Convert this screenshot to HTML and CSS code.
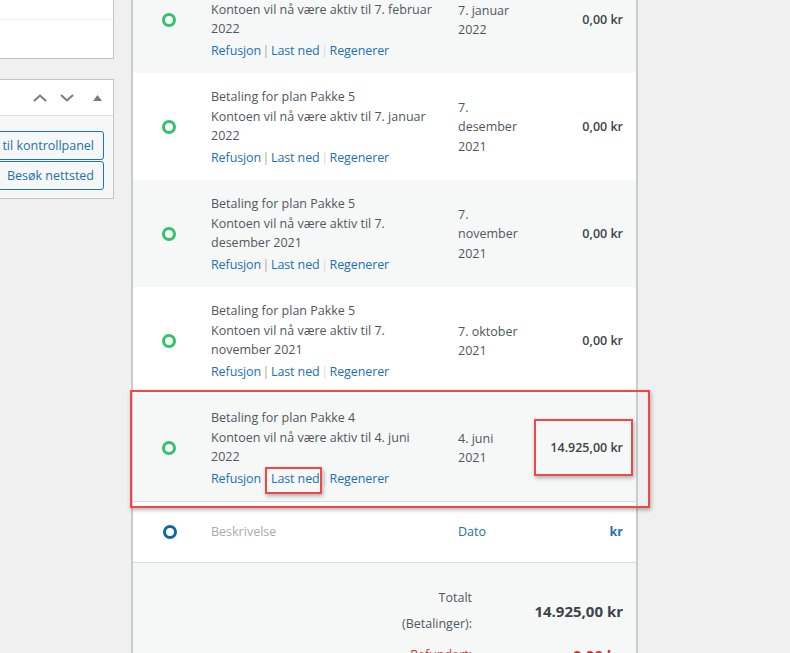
FILE: index.html
```html
<!DOCTYPE html>
<html>
  <head>
    <meta charset="utf-8">
    <title>Betalinger</title>
    <link rel="stylesheet" href="styles.css">
  </head>
  <body>
    <div class="page">
      <aside class="sidebar">
        <div class="box box-top">
          <div class="box-row"></div>
          <div class="box-row"></div>
        </div>

        <div class="box box-actions">
          <div class="box-head">
            <span class="handle">
              <svg width="14" height="8" viewBox="0 0 14 8"><path d="M1 7 L7 1.5 L13 7" fill="none" stroke="#787c82" stroke-width="2"/></svg>
            </span>
            <span class="handle">
              <svg width="14" height="8" viewBox="0 0 14 8"><path d="M1 1 L7 6.5 L13 1" fill="none" stroke="#787c82" stroke-width="2"/></svg>
            </span>
            <span class="handle toggle">
              <svg width="9" height="6" viewBox="0 0 9 6"><path d="M0 6 L4.5 0 L9 6 Z" fill="#787c82"/></svg>
            </span>
          </div>
          <div class="box-body">
            <a class="button" href="#">Tilbake til kontrollpanel</a>
            <a class="button" href="#">Besøk nettsted</a>
          </div>
        </div>
      </aside>

      <section class="payments">
        <div class="pay-row alt">
          <div class="pay-icon"><span class="dot"></span></div>
          <div class="pay-desc">
            <div>Betaling for plan Pakke 5</div>
            <div>Kontoen vil nå være aktiv til 7. februar 2022</div>
            <div class="row-actions"><a href="#">Refusjon</a><span class="sep">|</span><a href="#">Last ned</a><span class="sep light">|</span><a href="#">Regenerer</a></div>
          </div>
          <div class="pay-date">7. januar 2022</div>
          <div class="pay-amount">0,00 kr</div>
        </div>

        <div class="pay-row">
          <div class="pay-icon"><span class="dot"></span></div>
          <div class="pay-desc">
            <div>Betaling for plan Pakke 5</div>
            <div>Kontoen vil nå være aktiv til 7. januar 2022</div>
            <div class="row-actions"><a href="#">Refusjon</a><span class="sep">|</span><a href="#">Last ned</a><span class="sep light">|</span><a href="#">Regenerer</a></div>
          </div>
          <div class="pay-date">7. desember 2021</div>
          <div class="pay-amount">0,00 kr</div>
        </div>

        <div class="pay-row alt">
          <div class="pay-icon"><span class="dot"></span></div>
          <div class="pay-desc">
            <div>Betaling for plan Pakke 5</div>
            <div>Kontoen vil nå være aktiv til 7. desember 2021</div>
            <div class="row-actions"><a href="#">Refusjon</a><span class="sep">|</span><a href="#">Last ned</a><span class="sep light">|</span><a href="#">Regenerer</a></div>
          </div>
          <div class="pay-date">7. november 2021</div>
          <div class="pay-amount">0,00 kr</div>
        </div>

        <div class="pay-row">
          <div class="pay-icon"><span class="dot"></span></div>
          <div class="pay-desc">
            <div>Betaling for plan Pakke 5</div>
            <div>Kontoen vil nå være aktiv til 7. november 2021</div>
            <div class="row-actions"><a href="#">Refusjon</a><span class="sep">|</span><a href="#">Last ned</a><span class="sep light">|</span><a href="#">Regenerer</a></div>
          </div>
          <div class="pay-date">7. oktober 2021</div>
          <div class="pay-amount">0,00 kr</div>
        </div>

        <div class="pay-row alt last">
          <div class="pay-icon"><span class="dot"></span></div>
          <div class="pay-desc">
            <div>Betaling for plan Pakke 4</div>
            <div>Kontoen vil nå være aktiv til 4. juni 2022</div>
            <div class="row-actions"><a href="#">Refusjon</a><span class="sep">|</span><a href="#">Last ned</a><span class="sep light">|</span><a href="#">Regenerer</a></div>
          </div>
          <div class="pay-date">4. juni 2021</div>
          <div class="pay-amount">14.925,00 kr</div>
        </div>

        <div class="pay-row pay-foot">
          <div class="pay-icon"><span class="dot blue"></span></div>
          <div class="pay-desc muted">Beskrivelse</div>
          <div class="pay-date link">Dato</div>
          <div class="pay-amount link">kr</div>
        </div>

        <div class="totals">
          <div class="total-label">Totalt (Betalinger):</div>
          <div class="total-value">14.925,00 kr</div>
          <div class="total-label refund">Refundert:</div>
          <div class="total-value refund">0,00 kr</div>
        </div>
      </section>
    </div>

    <!-- red highlight marks from the screenshot -->
    <div class="mark mark-row"></div>
    <div class="mark mark-amount"></div>
    <div class="mark mark-link"></div>
  </body>
</html>
```

FILE: styles.css
```css
body {
  margin: 0;
  background-color: #f0f0f1;
  font-family: "Open Sans", "Noto Sans", sans-serif;
  font-size: 12.5px;
  color: #50575e;
  overflow: hidden;
}

a {
  color: #2271b1;
  text-decoration: none;
}

.page {
  display: flex;
  align-items: flex-start;
}

/* sidebar */

.sidebar {
  width: 220px;
  margin-left: -106px;
  flex-shrink: 0;
}

.box {
  background-color: #fff;
  border: 1px solid #c3c4c7;
  box-sizing: border-box;
}

.box-top {
  margin-top: -20px;
}

.box-row {
  height: 38px;
}

.box-row:first-child {
  height: 38px;
  border-bottom: 1px solid #f0f0f1;
}

.box-actions {
  margin-top: 20px;
}

.box-head {
  height: 35px;
  border-bottom: 1px solid #dcdcde;
  display: flex;
  align-items: center;
  justify-content: flex-end;
  padding-right: 11px;
  gap: 13px;
}

.handle {
  display: flex;
}

.handle.toggle {
  margin-left: 6px;
}

.box-body {
  background-color: #f6f7f7;
  padding: 15px 9px 8px 0;
  display: flex;
  flex-direction: column;
  gap: 1px;
}

.button {
  display: block;
  border: 1px solid #2271b1;
  border-radius: 3px;
  background-color: #f6f7f7;
  text-align: right;
  padding: 0 9px;
  line-height: 27px;
  font-size: 12.5px;
}

/* payments table */

.payments {
  width: 507px;
  margin-left: 17px;
  margin-top: -34px;
  border-left: 2px solid #c8ccd0;
  border-right: 2px solid #c8ccd0;
  box-sizing: border-box;
  flex-shrink: 0;
}

.pay-row {
  display: grid;
  grid-template-columns: 78px 247px 72px 1fr;
  align-items: center;
  background-color: #fff;
  padding: 14px 0 13px;
  line-height: 19.5px;
}

.pay-row.alt {
  background-color: #f6f7f7;
}

.pay-row.last {
  border-bottom: 1px solid #dcdcde;
}

.pay-icon {
  display: flex;
  justify-content: center;
  padding-right: 6px;
}

.dot {
  width: 14px;
  height: 14px;
  box-sizing: border-box;
  border: 3px solid #33c16a;
  border-radius: 50%;
}

.dot.blue {
  border-color: #0f67a3;
  border-width: 3.5px;
}

.pay-desc {
  padding-right: 22px;
}

.row-actions {
  margin-top: 2px;
}

.row-actions a {
  letter-spacing: -0.1px;
}

.sep {
  color: #b9a27c;
  margin: 0 1.5px;
}

.sep.light {
  color: #e3d6d6;
}

.pay-date {
  padding-right: 8px;
}

.pay-amount {
  text-align: right;
  padding-right: 13px;
  font-weight: 600;
  color: #3c434a;
}

.pay-foot {
  align-items: start;
  padding: 20px 0 20px;
  border-bottom: 1px solid #dcdcde;
}

.pay-foot .pay-icon {
  padding-top: 3px;
  padding-left: 2px;
}

.muted {
  color: #a7aaad;
}

.pay-foot .link {
  color: #2271b1;
}

.pay-foot .pay-amount {
  font-weight: 700;
}

.totals {
  background-color: #f6f7f7;
  display: grid;
  grid-template-columns: 1fr 80px 151px;
  align-items: center;
  row-gap: 5px;
  padding: 22px 13px 30px 0;
  line-height: 26px;
}

.total-label {
  grid-column: 2;
  text-align: right;
}

.total-value {
  text-align: right;
  font-weight: 700;
  font-size: 15px;
  color: #3c434a;
}

.total-value.refund,
.refund {
  color: #d63638;
}

/* annotation boxes */

.mark {
  position: absolute;
  border: 2px solid #f04848;
  box-shadow: 1px 2px 4px rgba(0, 0, 0, 0.3);
  box-sizing: border-box;
}

.mark-row {
  left: 130px;
  top: 390px;
  width: 520px;
  height: 118px;
}

.mark-amount {
  left: 534px;
  top: 419px;
  width: 99px;
  height: 57px;
}

.mark-link {
  left: 265px;
  top: 467px;
  width: 57px;
  height: 27px;
}
```
